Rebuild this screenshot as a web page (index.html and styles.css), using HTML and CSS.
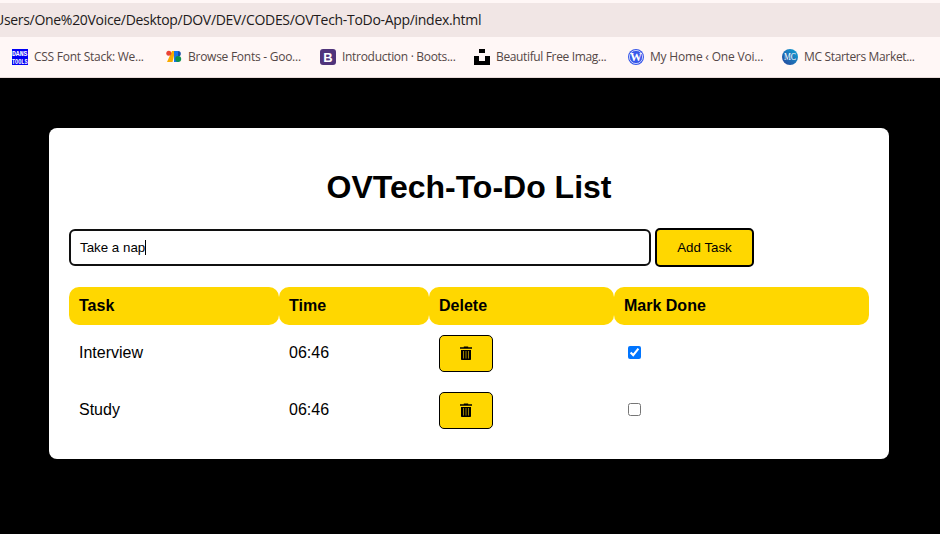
FILE: index.html
```html
<!DOCTYPE html>
<html lang="en">
<head>
<meta charset="utf-8">
<title>OVTech-To-Do List</title>
<link rel="stylesheet" href="styles.css">
</head>
<body>
<header class="browser">
  <div class="address"><span class="url">Users/One%20Voice/Desktop/DOV/DEV/CODES/OVTech-ToDo-App/index.html</span></div>
  <nav class="bookmarks">
    <a class="bookmark"><svg class="favicon" viewBox="0 0 16 16"><rect width="16" height="16" fill="#0000f5"/><text class="pixel-text" x="0" y="6.500" textLength="15.500" lengthAdjust="spacingAndGlyphs">DANS</text><text class="pixel-text" x="0" y="14.800" textLength="15.500" lengthAdjust="spacingAndGlyphs">TOOLS</text></svg><span class="label l1">CSS Font Stack: We...</span></a>
    <a class="bookmark"><svg class="favicon" viewBox="0 0 16 16"><path d="M6 2H9L6.500 13H1z" fill="#f9ab00"/><circle cx="2.800" cy="4.300" r="2.500" fill="#ea4335"/><path d="M8 2h4v11H8z" fill="#1a73e8"/><path d="M12 2a2.800 2.800 0 0 1 0 5.600z" fill="#174ea6"/><circle cx="12.200" cy="10.100" r="3" fill="#0d904f"/></svg><span class="label l2">Browse Fonts - Goo...</span></a>
    <a class="bookmark"><svg class="favicon" viewBox="0 0 16 16"><rect width="16" height="16" rx="3" fill="#50347b"/><text class="letter-b" x="8" y="12.500">B</text></svg><span class="label l3">Introduction · Boots...</span></a>
    <a class="bookmark"><svg class="favicon" viewBox="0 0 16 16"><path d="M5 0h6v4H5zM0 7h5v5h6V7h5v9H0z"/></svg><span class="label l4">Beautiful Free Imag...</span></a>
    <a class="bookmark"><svg class="favicon" viewBox="0 0 16 16"><circle cx="8" cy="8" r="8" fill="#3858e9"/><circle cx="8" cy="8" r="6.600" fill="none" stroke="#e4e8ff" stroke-width=".8"/><text class="letter-w" x="8" y="12">W</text></svg><span class="label l5">My Home ‹ One Voi...</span></a>
    <a class="bookmark"><svg class="favicon" viewBox="0 0 16 16"><defs><linearGradient id="mc" x1="1" y1="0" x2="0" y2="1"><stop stop-color="#12a5d8"/><stop offset="1" stop-color="#27439a"/></linearGradient></defs><circle cx="8" cy="8" r="8" fill="url(#mc)"/><text class="letter-mc" x="8" y="11.300" textLength="12" lengthAdjust="spacingAndGlyphs">MC</text></svg><span class="label l6">MC Starters Market...</span></a>
  </nav>
</header>
<main class="card">
  <h1>OVTech-To-Do List</h1>
  <div class="task-form">
    <div class="task-input">Take a nap<span class="caret"></span></div>
    <button class="add">Add Task</button>
  </div>
  <div class="table">
    <div class="row head"><div>Task</div><div>Time</div><div>Delete</div><div>Mark Done</div></div>
    <div class="row"><div>Interview</div><div>06:46</div><div><button class="delete" aria-label="Delete"><svg class="trash" viewBox="0 0 12 14"><path d="M0 1.300h3.800V.4h4.400v.9H12v1.500H0zM1 4h10v9.200q0 .8-.8.8H1.800Q1 14 1 13.200z"/><path class="slots" d="M3.500 5v7.500M6 5v7.500M8.500 5v7.500"/></svg></button></div><div><input type="checkbox" checked></div></div>
    <div class="row"><div>Study</div><div>06:46</div><div><button class="delete" aria-label="Delete"><svg class="trash" viewBox="0 0 12 14"><path d="M0 1.300h3.800V.4h4.400v.9H12v1.500H0zM1 4h10v9.200q0 .8-.8.8H1.800Q1 14 1 13.200z"/><path class="slots" d="M3.500 5v7.500M6 5v7.500M8.500 5v7.500"/></svg></button></div><div><input type="checkbox"></div></div>
  </div>
</main>
</body>
</html>
```
FILE: styles.css
```css
* { box-sizing: border-box; }
body { margin: 0; height: 534px; background: #000; overflow: hidden; font-family: "Liberation Sans", sans-serif; font-size: 16px; color: #000; }
.browser { height: 78px; padding-top: 3px; background: #fff7f6; border-bottom: 1px solid #e9dcda; font-family: "Open Sans", sans-serif; }
.address { height: 34px; display: flex; align-items: center; padding-bottom: 1px; background: #f1e6e5; overflow: hidden; }
.url { margin-left: -6px; font-size: 14px; letter-spacing: -0.305px; color: #211a1a; white-space: nowrap; }
.bookmarks { display: flex; height: 40px; padding-left: 12px; align-items: center; }
.bookmark { width: 154px; flex: none; display: flex; align-items: center; gap: 6px; font-size: 12px; color: #544746; white-space: nowrap; }
.label { padding-bottom: 1px; }
.l1 { letter-spacing: -0.26px; }
.l2 { letter-spacing: -0.26px; }
.l3 { letter-spacing: -0.3px; }
.l4 { letter-spacing: -0.36px; }
.l5 { letter-spacing: -0.2px; }
.l6 { letter-spacing: -0.34px; }
.favicon { width: 16px; height: 16px; flex: none; }
.pixel-text { font: bold 7px "Liberation Mono", monospace; fill: #fff; }
.letter-b { font: bold 13px "Liberation Sans", sans-serif; fill: #fff; text-anchor: middle; }
.letter-w { font: bold 12px "Liberation Serif", serif; fill: #fff; text-anchor: middle; }
.letter-mc { font: 10px "Liberation Serif", serif; fill: #fff; text-anchor: middle; }
.card { width: 840px; height: 331px; margin: 50px 0 0 49px; padding: 20px; background: #fff; border-radius: 8px; }
h1 { margin: 21px 0 22px; height: 37px; line-height: 37px; font-size: 32px; text-align: center; }
.task-form { display: flex; align-items: center; gap: 4px; height: 39px; }
.task-input { width: 582px; height: 37px; display: flex; align-items: center; padding-left: 9px; border: 2px solid #101010; border-radius: 6px; font-size: 13.333px; }
.caret { width: 1px; height: 15px; background: #000; }
button { margin: 0; padding: 0; background: #ffd700; color: #000; font: 13.333px "Liberation Sans", sans-serif; border-radius: 5px; }
.add { width: 99px; height: 39px; border: 2px solid #000; }
.table { margin-top: 20px; }
.row { display: grid; grid-template-columns: 210px 150px 185px 255px; height: 57px; }
.row > div { display: flex; align-items: center; padding: 0 10px 2px; }
.row > div:nth-child(3) { padding-bottom: 0; }
.row.head { height: 38px; font-weight: bold; }
.row.head > div { padding-bottom: 1px; background: #ffd700; border-radius: 10px; }
.delete { width: 54px; height: 37px; display: flex; align-items: center; justify-content: center; padding-bottom: 1px; border: 1px solid #000; }
.trash { width: 12px; height: 14px; }
.slots { fill: none; stroke: #ffd700; stroke-width: .6; }
input { margin: 3px 3px 3px 4px; width: 13px; height: 13px; }
```
